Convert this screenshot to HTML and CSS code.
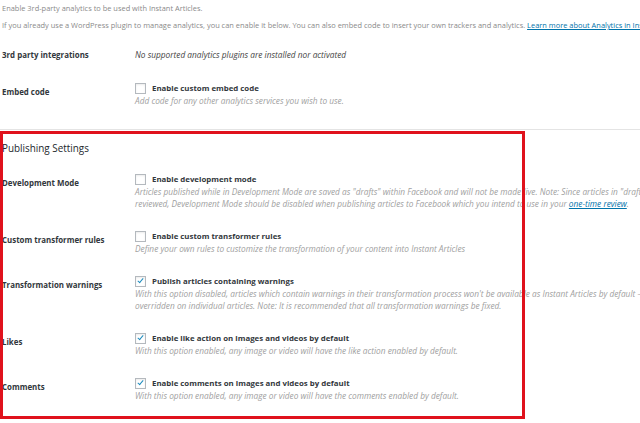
FILE: index.html
```html
<!DOCTYPE html>
<html lang="en">
<head>
    <meta charset="UTF-8">
    <meta name="viewport" content="width=device-width, initial-scale=1.0">
    <title>Instant Articles Settings</title>
    <link rel="stylesheet" href="styles.css">
</head>
<body>
    <div class="page">
        <p class="intro">Enable 3rd-party analytics to be used with Instant Articles.</p>
        <p class="intro">If you already use a WordPress plugin to manage analytics, you can enable it below. You can also embed code to insert your own trackers and analytics. <a href="#">Learn more about Analytics in Instant Articles</a>.</p>

        <div class="form-table">
            <div class="row">
                <div class="th">3rd party integrations</div>
                <div class="td td-plain"><p class="value">No supported analytics plugins are installed nor activated</p></div>
            </div>
            <div class="row">
                <div class="th">Embed code</div>
                <div class="td">
                    <label class="check"><span class="box"></span>Enable custom embed code</label>
                    <p class="desc">Add code for any other analytics services you wish to use.</p>
                </div>
            </div>
        </div>

        <hr class="sep">

        <h2 class="section-title">Publishing Settings</h2>
        <div class="form-table">
            <div class="row">
                <div class="th">Development Mode</div>
                <div class="td">
                    <label class="check"><span class="box"></span>Enable development mode</label>
                    <p class="desc">Articles published while in Development Mode are saved as "drafts" within Facebook and will not be made live. Note: Since articles in "draft" mode are not<br>reviewed, Development Mode should be disabled when publishing articles to Facebook which you intend to use in your <a href="#">one-time review</a>.</p>
                </div>
            </div>
            <div class="row">
                <div class="th">Custom transformer rules</div>
                <div class="td">
                    <label class="check"><span class="box"></span>Enable custom transformer rules</label>
                    <p class="desc">Define your own rules to customize the transformation of your content into Instant Articles</p>
                </div>
            </div>
            <div class="row">
                <div class="th">Transformation warnings</div>
                <div class="td">
                    <label class="check"><span class="box checked"></span>Publish articles containing warnings</label>
                    <p class="desc">With this option disabled, articles which contain warnings in their transformation process won't be available as Instant Articles by default &mdash; this can be<br>overridden on individual articles. Note: It is recommended that all transformation warnings be fixed.</p>
                </div>
            </div>
            <div class="row">
                <div class="th">Likes</div>
                <div class="td">
                    <label class="check"><span class="box checked"></span>Enable like action on images and videos by default</label>
                    <p class="desc">With this option enabled, any image or video will have the like action enabled by default.</p>
                </div>
            </div>
            <div class="row">
                <div class="th">Comments</div>
                <div class="td">
                    <label class="check"><span class="box checked"></span>Enable comments on images and videos by default</label>
                    <p class="desc">With this option enabled, any image or video will have the comments enabled by default.</p>
                </div>
            </div>
        </div>
    </div>

    <div class="highlight"></div>
</body>
</html>
```

FILE: styles.css
```css
html, body {
    margin: 0;
    padding: 0;
    overflow: hidden;
    background-color: #fff;
}
body {
    font-family: "Open Sans", "Noto Sans", sans-serif;
    color: #23282d;
    width: 640px;
    height: 423px;
    position: relative;
}
.page {
    width: 900px;
    padding: 1px 0 0 2px;
}
a {
    color: #0073aa;
}
.intro {
    margin: 0 0 3px;
    font-size: 7.45px;
    line-height: 14px;
    color: #8a8a8a;
    white-space: nowrap;
}
.form-table {
    display: flex;
    flex-direction: column;
}
.row {
    display: flex;
    padding: 9px 0 10px;
}
.th {
    width: 133px;
    flex: none;
    padding-top: 4px;
    font-size: 7.9px;
    font-weight: bold;
    line-height: 14px;
    color: #32373c;
}
.td {
    flex: 1;
}
.td-plain {
    padding-top: 4px;
}
.value {
    margin: 0;
    font-size: 8.3px;
    font-style: italic;
    line-height: 14px;
    color: #444;
    white-space: nowrap;
}
.check {
    display: flex;
    align-items: center;
    font-size: 7.85px;
    font-weight: bold;
    line-height: 14px;
    color: #32373c;
}
.box {
    width: 9px;
    height: 9px;
    border: 1px solid #b4b9be;
    background-color: #fff;
    box-shadow: inset 0 1px 2px rgba(0, 0, 0, 0.08);
    margin-right: 6px;
    position: relative;
}
.box.checked::after {
    content: "";
    position: absolute;
    left: 3px;
    top: 0px;
    width: 2px;
    height: 5px;
    border: solid #1e8cbe;
    border-width: 0 1.5px 1.5px 0;
    transform: rotate(40deg);
}
.desc {
    margin: 0;
    font-size: 8.3px;
    font-style: italic;
    line-height: 12px;
    color: #a0a0a0;
    white-space: nowrap;
}
.sep {
    border: 0;
    border-top: 1px solid #e4e4e4;
    margin: 12px 0 0 -2px;
}
.section-title {
    margin: 10px 0 7px;
    font-size: 9.9px;
    font-weight: normal;
    line-height: 16px;
    color: #23282d;
}
.highlight {
    position: absolute;
    left: 0;
    top: 131px;
    width: 519px;
    height: 282px;
    border: 3px solid #e0121c;
}
```
